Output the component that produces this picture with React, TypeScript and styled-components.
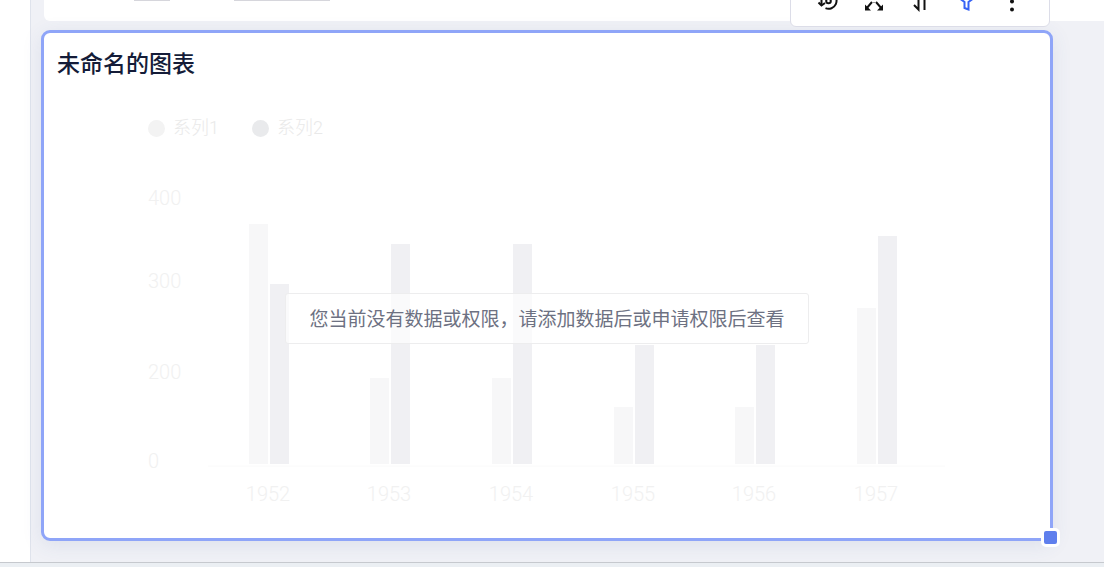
import React from "react";
import styled, { createGlobalStyle } from "styled-components";

const GlobalStyle = createGlobalStyle`
  *, *::before, *::after { box-sizing: border-box; }
  body {
    margin: 0;
    font-family: "Noto Sans CJK SC", "Noto Sans", sans-serif;
    color: #141c38;
  }
`;

const Page = styled.div`
  display: flex;
  flex-direction: column;
  height: 100vh;
  overflow: hidden;
  background: #f0f1f6;
`;

const Workspace = styled.div`
  display: flex;
  flex: 1;
  min-height: 0;
`;

const SidePanel = styled.aside`
  flex: none;
  width: 31px;
  background: #fff;
  border-right: 1px solid #dfe3ec;
`;

const Canvas = styled.main`
  flex: 1;
  min-width: 0;
  padding-left: 10px;
`;

const UpperCard = styled.section`
  display: flex;
  gap: 64px;
  height: 21px;
  margin-left: 3px;
  padding-left: 90px;
  background: #fff;
  border-radius: 0 0 0 6px;
`;

const FieldEdge = styled.div<{ $width: number }>`
  width: ${(p) => p.$width}px;
  height: 1px;
  background: #d6d6dc;
`;

const ChartCard = styled.section`
  position: relative;
  display: flex;
  flex-direction: column;
  margin: 9px 51px 0 0;
  background: #fff;
  border: 3px solid #8fa5f8;
  border-radius: 9px;
  box-shadow: 0 4px 20px rgba(60, 90, 150, 0.1);
`;

const Title = styled.h2`
  margin: 0;
  padding: 13px 13px 21px;
  font-size: 23px;
  line-height: 32px;
  font-weight: 500;
`;

const ChartBody = styled.div`
  display: grid;
  justify-items: center;
  align-items: center;
  height: 439px;
  & > * { grid-area: 1 / 1; }
`;

const ChartArea = styled.div`
  display: flex;
  flex-direction: column;
  align-self: start;
  padding-top: 13px;
`;

const Legend = styled.ul`
  display: flex;
  gap: 33px;
  margin: 0;
  padding: 0;
  list-style: none;
`;

const LegendItem = styled.li<{ $color: string }>`
  display: flex;
  align-items: center;
  gap: 8px;
  font-family: Roboto, "Noto Sans CJK SC", sans-serif;
  font-size: 18px;
  line-height: 32px;
  font-weight: 300;
  color: #e9e9e9;
  &::before {
    content: "";
    width: 17px;
    height: 17px;
    border-radius: 50%;
    background: ${(p) => p.$color};
  }
`;

const Plot = styled.svg`
  display: block;
  text {
    font-family: Roboto, "Noto Sans", sans-serif;
    font-size: 20px;
    font-weight: 300;
    fill: #f1f1f1;
  }
`;

const Notice = styled.p`
  z-index: 1;
  margin: 0;
  padding: 0 23px 2px;
  font-size: 19px;
  line-height: 47px;
  color: #6d7182;
  white-space: nowrap;
  background: rgba(255, 255, 255, 0.65);
  border: 1px solid #ededee;
  border-radius: 3px;
`;

const Toolbar = styled.div`
  position: absolute;
  z-index: 2;
  right: 0;
  bottom: calc(100% + 6px);
  display: flex;
  justify-content: center;
  width: 260px;
  height: 52px;
  background: #fff;
  border: 1px solid #dcdde8;
  border-radius: 6px;
`;

const ToolButton = styled.button<{ $active?: boolean }>`
  display: flex;
  align-items: center;
  justify-content: center;
  width: 46px;
  padding: 0;
  border: 0;
  background: none;
  color: ${(p) => (p.$active ? "#3662f5" : "#111")};
  cursor: pointer;
`;

const ResizeHandle = styled.button`
  position: absolute;
  right: -10px;
  bottom: -9px;
  width: 19px;
  height: 19px;
  padding: 0;
  background: #5f7fed;
  border: 3px solid #fff;
  border-radius: 5px;
  cursor: nwse-resize;
`;

const StatusBar = styled.footer`
  flex: none;
  height: 5px;
  background: #ebeff3;
  border-top: 1px solid #c6c9ce;
`;

const strokeProps = {
  width: 24,
  height: 24,
  viewBox: "0 0 24 24",
  fill: "none",
  stroke: "currentColor",
  strokeWidth: 2,
  "aria-hidden": true,
} as const;

const RefreshIcon = () => (
  <svg {...strokeProps}>
    <path d="M9.5 19.200A8 8 0 1 0 5.500 8V15.500" />
    <path d="M2.500 13.500l3 3 3.500-2.500" />
    <circle cx="12.500" cy="12" r="2.300" />
  </svg>
);

const ExpandIcon = () => (
  <svg {...strokeProps}>
    <path d="M10 13L4 20M14 13l6 7M10 9L4 3M14 9l6-6" />
    <path d="M3 15.500v6h6zM21 15.500v6h-6zM3 7.500v-6h6zM21 7.500v-6h-6z" fill="currentColor" stroke="none" />
    <path d="M10.500 13.500h3" stroke="#999" strokeWidth="1" />
  </svg>
);

const SortIcon = () => (
  <svg {...strokeProps}>
    <path d="M10.500 2v18.500L6 16" />
    <path d="M16.500 21V3l4 4.500" />
  </svg>
);

const FilterIcon = () => (
  <svg {...strokeProps}>
    <path d="M5 4v5l5.500 4V19l4 1.500V13L20 9V4z" />
  </svg>
);

const MoreIcon = () => (
  <svg {...strokeProps} fill="currentColor" stroke="none">
    <circle cx="12" cy="4.500" r="2" />
    <circle cx="12" cy="12.500" r="2" />
    <circle cx="12" cy="20.500" r="2" />
  </svg>
);

const tools = [
  { label: "刷新", Icon: RefreshIcon },
  { label: "展开", Icon: ExpandIcon },
  { label: "排序", Icon: SortIcon },
  { label: "筛选", Icon: FilterIcon, active: true },
  { label: "更多", Icon: MoreIcon },
];

const bars = [
  { year: "1952", x: 101, first: 240, second: 180 },
  { year: "1953", x: 222, first: 86, second: 220 },
  { year: "1954", x: 344, first: 86, second: 220 },
  { year: "1955", x: 466, first: 57, second: 119 },
  { year: "1956", x: 587, first: 57, second: 119 },
  { year: "1957", x: 709, first: 156, second: 228 },
];

const axis = [
  { value: "400", y: 61 },
  { value: "300", y: 144 },
  { value: "200", y: 235 },
  { value: "0", y: 324 },
];

const BASE = 320;

export default function App() {
  return (
    <>
      <GlobalStyle />
      <Page>
        <Workspace>
          <SidePanel />
          <Canvas>
            <UpperCard>
              <FieldEdge $width={36} />
              <FieldEdge $width={96} />
            </UpperCard>
            <ChartCard>
              <Toolbar role="toolbar">
                {tools.map(({ label, Icon, active }) => (
                  <ToolButton key={label} type="button" aria-label={label} $active={active}>
                    <Icon />
                  </ToolButton>
                ))}
              </Toolbar>
              <Title>未命名的图表</Title>
              <ChartBody>
                <ChartArea>
                  <Legend>
                    <LegendItem $color="#f3f3f3">系列1</LegendItem>
                    <LegendItem $color="#e9eaec">系列2</LegendItem>
                  </Legend>
                  <Plot width="798" height="370" viewBox="0 0 798 370">
                    {axis.map((a) => (
                      <text key={a.value} x="0" y={a.y}>{a.value}</text>
                    ))}
                    <path d="M60 322H797" stroke="#fafafa" />
                    {bars.map((b) => (
                      <g key={b.year}>
                        <rect x={b.x} y={BASE - b.first} width="19" height={b.first} fill="#f7f7f8" />
                        <rect x={b.x + 21} y={BASE - b.second} width="19" height={b.second} fill="#f0f0f3" />
                        <text x={b.x + 19} y="357" textAnchor="middle">{b.year}</text>
                      </g>
                    ))}
                  </Plot>
                </ChartArea>
                <Notice>您当前没有数据或权限，请添加数据后或申请权限后查看</Notice>
              </ChartBody>
              <ResizeHandle type="button" aria-label="调整大小" />
            </ChartCard>
          </Canvas>
        </Workspace>
        <StatusBar />
      </Page>
    </>
  );
}
